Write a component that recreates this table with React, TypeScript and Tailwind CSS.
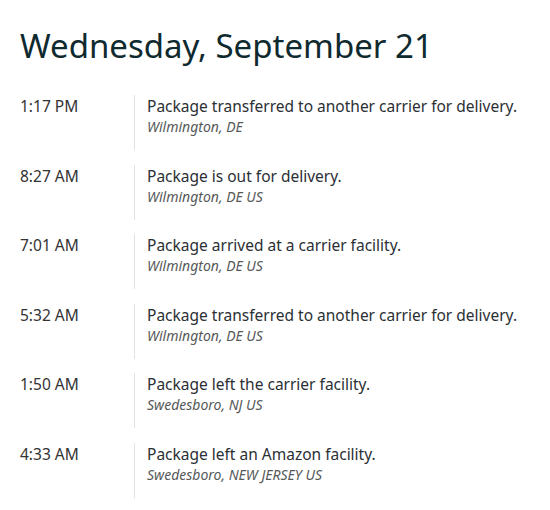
const events = [
  { time: "1:17 PM", text: "Package transferred to another carrier for delivery.", place: "Wilmington, DE" },
  { time: "8:27 AM", text: "Package is out for delivery.", place: "Wilmington, DE US" },
  { time: "7:01 AM", text: "Package arrived at a carrier facility.", place: "Wilmington, DE US" },
  { time: "5:32 AM", text: "Package transferred to another carrier for delivery.", place: "Wilmington, DE US" },
  { time: "1:50 AM", text: "Package left the carrier facility.", place: "Swedesboro, NJ US" },
  { time: "4:33 AM", text: "Package left an Amazon facility.", place: "Swedesboro, NEW JERSEY US" },
];

export default function App() {
  return (
    <div className="min-h-[510px] bg-white px-5 pt-[26px] text-[#0f1111] font-['Noto_Sans',sans-serif]">
      <h1 className="text-[33px] leading-[40px] text-[#0f2a2f]">Wednesday, September 21</h1>
      <div className="mt-[29px] flex flex-col gap-[14.5px]">
        {events.map((e) => (
          <div key={e.time} className="flex">
            <div className="w-[114px] shrink-0 text-[15.5px] leading-[22px] text-[#333]">{e.time}</div>
            <div className="border-l border-[#e3e3e3] pl-[12px] pb-[14px]">
              <div className="text-[15.5px] leading-[22px] text-[#2b3034]">{e.text}</div>
              <div className="pt-[1px] text-[14px] italic leading-[18px] text-[#565959]">{e.place}</div>
            </div>
          </div>
        ))}
      </div>
    </div>
  );
}
